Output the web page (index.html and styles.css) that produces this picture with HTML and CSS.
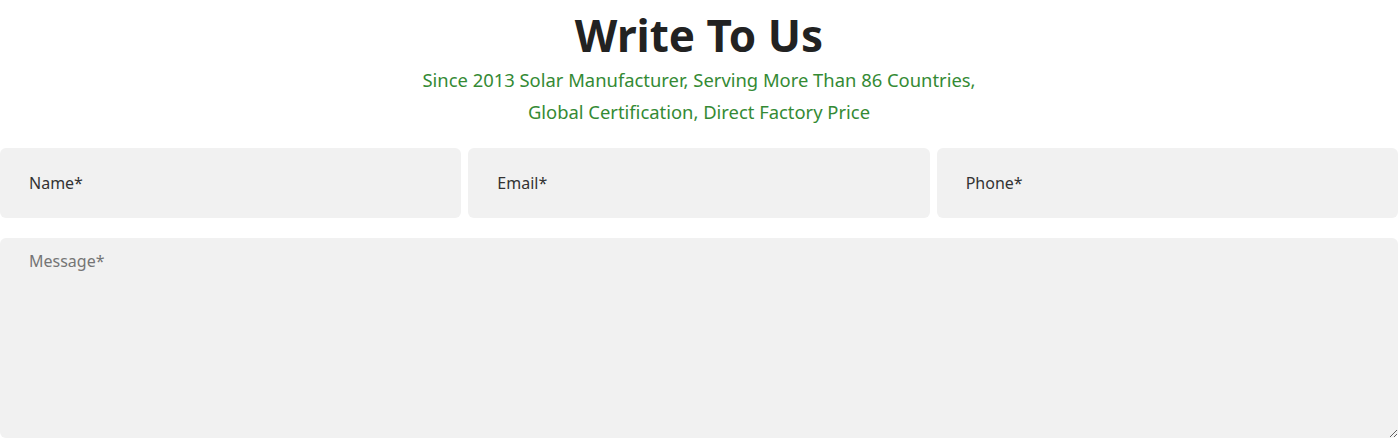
FILE: index.html
```html
<!DOCTYPE html>
<html lang="en">
<head>
    <meta charset="UTF-8">
    <meta name="viewport" content="width=device-width, initial-scale=1.0">
    <title>Write To Us</title>
    <link rel="stylesheet" href="styles.css">
</head>
<body>
    <div class="contact">
        <h2>Write To Us</h2>
        <p class="sub">Since 2013 Solar Manufacturer, Serving More Than 86 Countries,<br>Global Certification, Direct Factory Price</p>
        <form class="contact-form">
            <div class="row">
                <input type="text" placeholder="Name*">
                <input type="email" placeholder="Email*">
                <input type="tel" placeholder="Phone*">
            </div>
            <textarea placeholder="Message*"></textarea>
        </form>
    </div>
</body>
</html>
```

FILE: styles.css
```css
body {
    margin: 0;
    padding: 0;
    font-family: "Noto Sans", "Open Sans", sans-serif;
    background: #fff;
}
.contact {
    text-align: center;
    padding-top: 5px;
}
h2 {
    margin: 0;
    font-size: 44px;
    line-height: 60px;
    font-weight: 700;
    color: #222;
}
.sub {
    margin: -1px 0 0;
    font-size: 18.4px;
    line-height: 32px;
    color: #348a34;
}
.contact-form {
    margin-top: 20px;
}
.row {
    display: flex;
    gap: 7px;
    margin-bottom: 20px;
}
.row input {
    flex: 1;
    min-width: 0;
    height: 70px;
    box-sizing: border-box;
    border: none;
    border-radius: 6px;
    background: #f1f1f1;
    padding: 0 29px;
    font-family: inherit;
    font-size: 16px;
    color: #333;
    outline: none;
}
.row input::placeholder {
    color: #333;
}
textarea {
    display: block;
    width: 100%;
    height: 200px;
    box-sizing: border-box;
    border: none;
    border-radius: 6px;
    background: #f1f1f1;
    padding: 12px 29px;
    font-family: inherit;
    font-size: 16px;
    color: #333;
    outline: none;
}
textarea::placeholder {
    color: #757575;
}
```
